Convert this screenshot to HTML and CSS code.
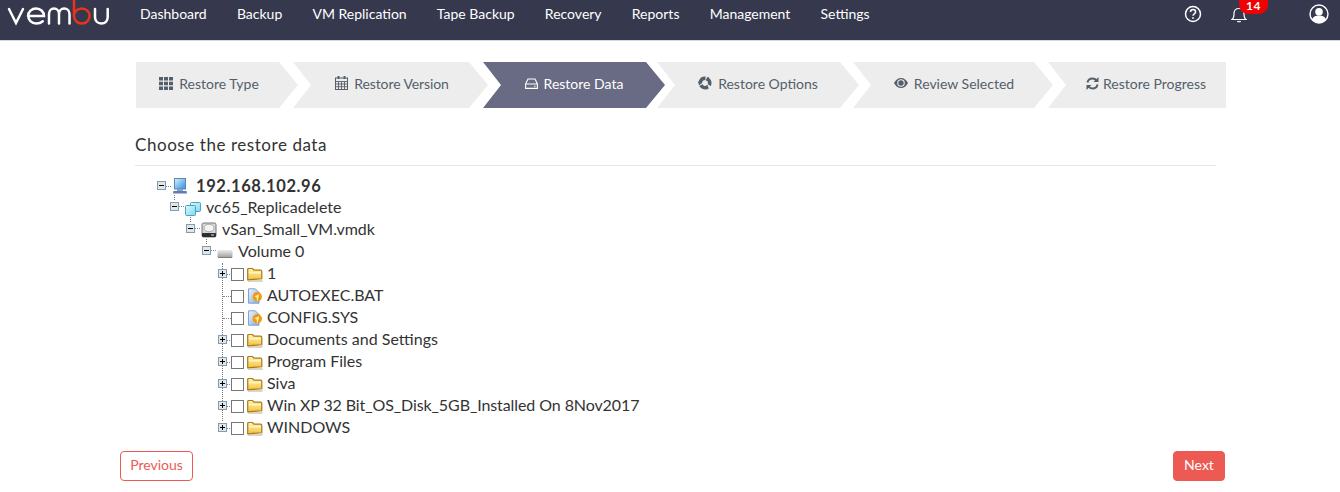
FILE: index.html
```html
<!DOCTYPE html>
<html lang="en">
<head>
<meta charset="utf-8">
<title>Vembu Restore</title>
<link rel="stylesheet" href="styles.css">
</head>
<body>
<svg class="defs" width="0" height="0" aria-hidden="true">
  <defs>
    <linearGradient id="fold" x1="0" y1="0" x2="0" y2="1"><stop offset="0" stop-color="#fff6b8"/><stop offset="1" stop-color="#f4c23e"/></linearGradient>
    <linearGradient id="page" x1="0" y1="0" x2="1" y2="1"><stop offset="0" stop-color="#f0f6fd"/><stop offset="1" stop-color="#7fabe0"/></linearGradient>
    <linearGradient id="screen" x1="0" y1="0" x2="1" y2="1"><stop offset="0" stop-color="#d8f2ff"/><stop offset="1" stop-color="#2f8fe0"/></linearGradient>
    <linearGradient id="vol" x1="0" y1="0" x2="0" y2="1"><stop offset="0" stop-color="#ececec"/><stop offset="1" stop-color="#9a9a9a"/></linearGradient>
    <linearGradient id="cyan" x1="0" y1="0" x2="1" y2="1"><stop offset="0" stop-color="#dff8fc"/><stop offset="1" stop-color="#7fd6ec"/></linearGradient>
    <symbol id="folder" viewBox="0 0 16 16"><path d="M.7 13.800V3.500q0-1 1-1h3.800l1.500 1.700h6.500q1.300 0 1.300 1.300v7.300z" fill="url(#fold)" stroke="#a97a14" stroke-width="1.200"/><path d="M1.800 6.800h12" stroke="#fffbe0"/><path d="M1 15h14.500" stroke="#b5ab90"/></symbol>
    <symbol id="file" viewBox="0 0 16 16"><path d="M1.500.8h6.800l3.700 3.700v10.700H1.500z" fill="url(#page)" stroke="#6f9bd6" stroke-width=".9"/><circle cx="10.300" cy="8.800" r="4.700" fill="#f39a12"/><path d="M7.500 8.300l4.800-2-2.300 8.500-.3-5.200z" fill="#fff0a0"/></symbol>
    <symbol id="minus" viewBox="0 0 9 9"><rect x=".5" y=".5" width="8" height="8" fill="#e6e6e0" stroke="#7c9cc0"/><path d="M2 4.500h5" stroke="#000"/></symbol>
    <symbol id="plus" viewBox="0 0 9 9"><rect x=".5" y=".5" width="8" height="8" fill="#e6e6e0" stroke="#7c9cc0"/><path d="M2 4.500h5M4.500 2v5" stroke="#000"/></symbol>
  </defs>
</svg>

<header class="navbar">
  <svg class="logo" width="110" height="26" viewBox="0 0 110 26" fill="none" stroke-width="2.500" stroke-linecap="round" aria-label="vembu">
    <path d="M9 9l7 14 7-14" stroke="#fff"/>
    <path d="M28 16h16c0-4-3.200-7.500-7.800-7.500s-8 3.200-8 7.300 3.200 7.700 8 7.700c2.900 0 5-.8 6.600-2.200" stroke="#fff"/>
    <path d="M49 23.500V14c0-3.300 2.200-5.500 5-5.500s5 2.200 5 5.500v9.500M59 14c0-3.300 2.200-5.500 5.200-5.500s5.300 2.200 5.300 5.500v9.500" stroke="#fff"/>
    <path d="M74 0v16c0 4.200 3.300 7.500 7.800 7.500s7.800-3.300 7.800-7.500-3.300-7.500-7.800-7.500S74 11.800 74 16" stroke="#e8341c"/>
    <path d="M95 9v8c0 4 2.500 6.500 6.300 6.500s6.400-2.500 6.400-6.500V9" stroke="#fff"/>
  </svg>
  <nav class="menu">
    <a>Dashboard</a><a>Backup</a><a>VM Replication</a><a>Tape Backup</a><a>Recovery</a><a>Reports</a><a>Management</a><a>Settings</a>
  </nav>
  <div class="tools">
    <svg class="tool-help" width="18" height="18" viewBox="0 0 18 18" fill="none" stroke="#fff" stroke-width="1.500"><circle cx="9" cy="9" r="7.500"/><path d="M6.500 7c0-1.500 1.100-2.400 2.600-2.400S11.600 5.500 11.600 7c0 1.800-2.600 1.900-2.600 3.700"/><path d="M9 12.200v1.500" stroke-width="1.700"/></svg>
    <div class="bell">
      <svg width="16" height="17" viewBox="0 0 16 17" fill="none" stroke="#fff" stroke-width="1.200"><path d="M1 13.500c2-1.500 2-3.500 2-6 0-3 2-5 5-5s5 2 5 5c0 2.500 0 4.500 2 6z"/><path d="M6.500 15c.3 1 2.700 1 3 0"/></svg>
      <span class="badge">14</span>
    </div>
    <svg class="tool-user" width="20" height="20" viewBox="0 0 20 20"><circle cx="10" cy="10" r="9" fill="none" stroke="#fff" stroke-width="1.400"/><circle cx="10" cy="7.800" r="3.800" fill="#fff"/><path d="M3 16c1-3.500 3.500-4.500 7-4.500s6 1 7 4.500c-2 2-4.500 3-7 3s-5-1-7-3z" fill="#fff"/></svg>
  </div>
</header>

<main class="page">
  <ol class="steps">
    <li class="step s1">
      <svg class="ico" width="14" height="13" viewBox="0 0 14 13" fill="currentColor"><path d="M0 0h4v3.500H0zM5 0h4v3.500H5zM10 0h4v3.500h-4zM0 4.700h4v3.500H0zM5 4.700h4v3.500H5zM10 4.700h4v3.500h-4zM0 9.400h4v3.500H0zM5 9.400h4v3.500H5zM10 9.400h4v3.500h-4z"/></svg>
      Restore Type</li>
    <li class="step s2">
      <svg class="ico" width="13" height="14" viewBox="0 0 13 14" fill="none" stroke="currentColor"><rect x=".5" y="2" width="12" height="11.500"/><path d="M.5 5.500h12M.5 8h12M.5 10.700h12M3.500 5.500v8M6.500 5.500v8M9.500 5.500v8" stroke-width=".9"/><path d="M3.500 0v3M9.500 0v3" stroke-width="2"/></svg>
      Restore Version</li>
    <li class="step s3 active">
      <svg class="ico" width="13" height="11" viewBox="0 0 13 11" fill="none" stroke="currentColor" stroke-width="1.100"><path d="M.6 6L3 1h7l2.400 5v4.400H.6zM.6 6h11.800"/><path d="M9 8.300h1.500" /></svg>
      Restore Data</li>
    <li class="step s4">
      <svg class="ico" width="14" height="14" viewBox="0 0 14 14" fill="none" stroke="currentColor"><circle cx="7" cy="7" r="4.700" stroke-width="3.600" stroke-dasharray="7.900 1.950" transform="rotate(-70 7 7)"/><path d="M10.500 .8l1 4.200-4-.8zM1 9.500l-.8-4 4 1.300zM9.500 13.500l-3.500-2.800 3.800-1.700z" fill="currentColor" stroke="none"/></svg>
      Restore Options</li>
    <li class="step s5">
      <svg class="ico" width="14" height="10" viewBox="0 0 14 10"><path d="M0 5c1.500-3 4-5 7-5s5.500 2 7 5c-1.500 3-4 5-7 5S1.500 8 0 5z" fill="currentColor"/><circle cx="7" cy="5" r="3.800" fill="#ededed"/><circle cx="7" cy="5" r="2.700" fill="currentColor"/></svg>
      Review Selected</li>
    <li class="step s6">
      <svg class="ico" width="13" height="13" viewBox="0 0 13 13" fill="none" stroke="currentColor" stroke-width="2"><path d="M1.500 5.500C2 3 4 1.500 6.500 1.500c1.800 0 3.100.8 4 2"/><path d="M11.500 7.500c-.5 2.500-2.500 4-5 4-1.800 0-3.100-.8-4-2"/><path d="M12.500 0v5h-5z" fill="currentColor" stroke="none"/><path d="M.5 13V8h5z" fill="currentColor" stroke="none"/></svg>
      Restore Progress</li>
  </ol>

  <h2 class="title">Choose the restore data</h2>

  <ul class="tree">
    <li class="row lvl0 root"><svg class="tg"><use href="#minus"/></svg><i class="dash"></i>
      <svg class="nodeico" viewBox="0 0 16 16"><rect x="2.500" y=".5" width="11" height="10.500" fill="url(#screen)" stroke="#5c86b8"/><path d="M5 11h6v2H5z" fill="#8aa0c8"/><path d="M1.500 13h13l.5 2.500H1z" fill="#5f7bb0"/></svg>
      <span>192.168.102.96</span></li>
    <li class="row lvl1"><svg class="tg"><use href="#minus"/></svg><i class="dash"></i>
      <svg class="nodeico" viewBox="0 0 16 16"><rect x="5.500" y="2.500" width="10" height="9" rx="1" fill="url(#cyan)" stroke="#45a3c6"/><rect x=".5" y="5.500" width="10" height="10" rx="1" fill="url(#cyan)" stroke="#45a3c6"/></svg>
      <span>vc65_Replicadelete</span></li>
    <li class="row lvl2"><svg class="tg"><use href="#minus"/></svg><i class="dash"></i>
      <svg class="nodeico" viewBox="0 0 16 16"><rect x="1" y="1" width="14" height="14" rx="1.500" fill="#d8d8d8" stroke="#777"/><ellipse cx="8" cy="6" rx="5" ry="3.800" fill="#f4f4f4" stroke="#aaa"/><rect x="1" y="11" width="14" height="4" rx="1" fill="#2e2e2e"/><path d="M10 13h3" stroke="#ddd"/></svg>
      <span>vSan_Small_VM.vmdk</span></li>
    <li class="row lvl3"><svg class="tg"><use href="#minus"/></svg><i class="dash"></i>
      <svg class="nodeico" viewBox="0 0 16 16"><rect x=".5" y="6" width="15" height="8" rx="1.500" fill="url(#vol)"/><path d="M1 13.500h14" stroke="#7e7e7e"/></svg>
      <span>Volume 0</span></li>
    <li class="row lvl4"><svg class="tg"><use href="#plus"/></svg><i class="dash"></i><b class="cb"></b><svg class="nodeico"><use href="#folder"/></svg><span>1</span></li>
    <li class="row lvl4 leaf"><i class="dash long"></i><b class="cb"></b><svg class="nodeico"><use href="#file"/></svg><span>AUTOEXEC.BAT</span></li>
    <li class="row lvl4 leaf"><i class="dash long"></i><b class="cb"></b><svg class="nodeico"><use href="#file"/></svg><span>CONFIG.SYS</span></li>
    <li class="row lvl4"><svg class="tg"><use href="#plus"/></svg><i class="dash"></i><b class="cb"></b><svg class="nodeico"><use href="#folder"/></svg><span>Documents and Settings</span></li>
    <li class="row lvl4"><svg class="tg"><use href="#plus"/></svg><i class="dash"></i><b class="cb"></b><svg class="nodeico"><use href="#folder"/></svg><span>Program Files</span></li>
    <li class="row lvl4"><svg class="tg"><use href="#plus"/></svg><i class="dash"></i><b class="cb"></b><svg class="nodeico"><use href="#folder"/></svg><span>Siva</span></li>
    <li class="row lvl4 tight"><svg class="tg"><use href="#plus"/></svg><i class="dash"></i><b class="cb"></b><svg class="nodeico"><use href="#folder"/></svg><span>Win XP 32 Bit_OS_Disk_5GB_Installed On 8Nov2017</span></li>
    <li class="row lvl4 last"><svg class="tg"><use href="#plus"/></svg><i class="dash"></i><b class="cb"></b><svg class="nodeico"><use href="#folder"/></svg><span>WINDOWS</span></li>
  </ul>

  <div class="actions">
    <button class="btn btn-outline">Previous</button>
    <button class="btn btn-fill">Next</button>
  </div>
</main>
</body>
</html>
```
FILE: styles.css
```css
* { box-sizing: border-box; }
html, body { margin: 0; padding: 0; }
body { height: 492px; overflow: hidden; background: #fff; font-family: "Lato", "Liberation Sans", sans-serif; color: #333; }
.defs { position: absolute; }

.navbar { height: 41px; background: #36384e; border-bottom: 1px solid #d8d8dc; display: flex; align-items: flex-start; color: #fff; }
.logo { flex: none; display: block; }
.menu { display: flex; gap: 30.200px; margin-left: 30px; font-size: 14px; line-height: 28px; }
.tools { margin-left: auto; height: 28px; display: flex; align-items: center; padding-right: 11px; }
.tool-help { margin-right: 29px; }
.bell { position: relative; width: 16px; height: 17px; margin-right: 62px; }
.bell svg { display: block; }
.badge { position: absolute; left: 8px; top: -6px; width: 29px; height: 14px; line-height: 12px; border-radius: 0 0 9px 9px; background: #f00000; font-size: 12px; font-weight: 700; letter-spacing: .5px; text-align: center; color: #fff; }

.page { padding: 21px 0 0; position: relative; }
.steps { list-style: none; margin: 0 0 0 136px; padding: 0; display: flex; width: 1090px; height: 46px; color: #555f6b; font-size: 14px; }
.step { height: 46px; background: #ededed; display: flex; align-items: center; justify-content: center; gap: 6px; padding-bottom: 4px; margin-left: -5px; clip-path: polygon(0 0, calc(100% - 19px) 0, 100% 50%, calc(100% - 19px) 100%, 0 100%, 18px 50%); }
.ico { flex: none; }
.s1 { width: 162px; margin-left: 0; clip-path: polygon(0 0, calc(100% - 19px) 0, 100% 50%, calc(100% - 19px) 100%, 0 100%); padding-right: 16px; }
.s2 { width: 195px; padding-left: 3px; letter-spacing: -.1px; }
.s3 { width: 182px; padding-left: 0; }
.s4 { width: 202px; margin-left: -8px; padding-left: 0; }
.s5 { width: 200px; margin-left: -6px; padding-left: 2px; }
.s6 { width: 178px; margin-left: -5px; padding-left: 18px; gap: 4px; clip-path: polygon(0 0, 100% 0, 100% 100%, 0 100%, 18px 50%); }
.active { background: #696b84; color: #fff; }

.title { margin: 27px 0 0 135px; width: 1081px; height: 31px; border-bottom: 1px solid #e5e5e5; font-size: 17px; line-height: 20px; font-weight: 400; color: #333; letter-spacing: .56px; }

.tree { list-style: none; margin: 9px 0 0; padding: 0; position: relative; font-size: 16px; color: #333; }
.tree::before { content: ""; position: absolute; left: 222px; top: 88px; height: 158px; border-left: 1px dotted #777; }
.row { height: 22px; display: flex; align-items: center; position: relative; }
.row > span { margin-bottom: 4px; }
.lvl0 { padding-left: 157px; }
.lvl1 { padding-left: 170px; }
.lvl2 { padding-left: 186px; }
.lvl3 { padding-left: 202px; }
.lvl4 { padding-left: 218px; }
.leaf { padding-left: 223px; }
.root { font-size: 16.500px; font-weight: 700; letter-spacing: .6px; }
.root > span { margin-bottom: 0; }
.tight { letter-spacing: -.09px; }
.tg { width: 9px; height: 9px; flex: none; margin-top: -1px; }
.lvl1 .tg, .lvl2 .tg, .lvl3 .tg { margin-top: -4px; }
.lvl1::before, .lvl2::before, .lvl3::before { content: ""; position: absolute; top: -2px; height: 5px; border-left: 1px dotted #777; }
.lvl1::before { left: 174px; }
.lvl2::before { left: 190px; }
.lvl3::before { left: 206px; }
.dash { width: 5px; border-top: 1px dotted #888; flex: none; }
.dash.long { width: 8px; }
.lvl1 .dash, .lvl2 .dash, .lvl3 .dash { margin-top: -4px; }
.cb { width: 13px; height: 13px; border: 1px solid #767676; background: #fff; flex: none; margin-right: 3px; }
.lvl4 .cb { margin-left: -1px; }
.leaf .cb { margin-left: 0; }
.nodeico { width: 16px; height: 16px; flex: none; margin-right: 4px; }
.lvl0 .nodeico { margin-right: 8px; }
.lvl0 .dash, .lvl1 .dash, .lvl2 .dash, .lvl3 .dash { margin-right: 1px; }
.lvl1 .nodeico, .lvl2 .nodeico { margin-right: 5px; }
.lvl3 .nodeico { margin-right: 5px; }

.actions { display: flex; justify-content: space-between; margin: 12px 0 0 120px; width: 1105px; }
.btn { height: 30px; border-radius: 4px; font: 14px "Lato", "Liberation Sans", sans-serif; padding: 0 0 3px; }
.btn-outline { width: 73px; background: #fff; color: #ec5a53; border: 1px solid #ec5a53; }
.btn-fill { width: 52px; background: #ec5a53; color: #fff; border: 1px solid #ec5a53; }
```
